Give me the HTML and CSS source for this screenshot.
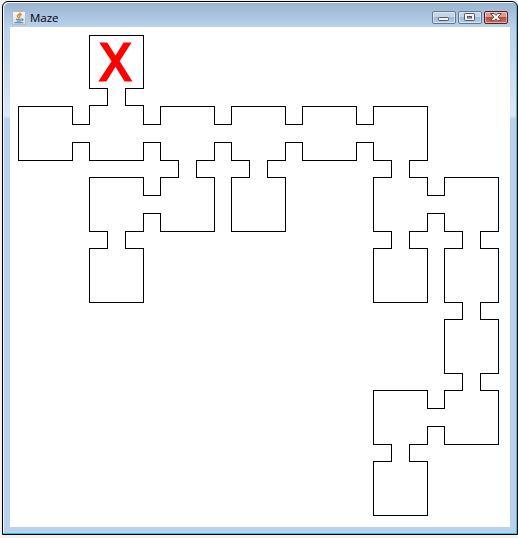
FILE: index.html
```
<!DOCTYPE html>
<html lang="en">
<head>
<meta charset="utf-8">
<title>Maze</title>
<link rel="stylesheet" href="styles.css">
</head>
<body>
<div class="window">
  <header class="titlebar">
    <svg class="app-icon" width="14" height="14" viewBox="0 0 14 14">
      <defs><linearGradient id="ic" x1="0" y1="0" x2="0" y2="1"><stop offset="0" stop-color="#f9f9f9"/><stop offset="1" stop-color="#d6dce3"/></linearGradient></defs>
      <rect x=".5" y=".5" width="13" height="13" fill="url(#ic)" stroke="#b5bbc2"/>
      <path d="M8.3 1.5C8.5 3.5 4.6 3.8 5.4 5.4L6.8 7M9.8 3.4C7.5 4.2 7.2 5.3 8 6.6" fill="none" stroke="#e58425" stroke-width="1.4"/>
      <path d="M4 8.2H9.5M4.7 10H9M9.8 8.2C11.8 7.6 11 9.6 9.5 9.7M2.5 11.7H11.3" fill="none" stroke="#4878a0" stroke-width="1.1"/>
    </svg>
    <h1 class="title">Maze</h1>
    <div class="controls">
      <button class="control" aria-label="Minimize">
        <svg width="22" height="11" viewBox="0 0 22 11"><rect x="5.5" y="5.5" width="10" height="3" rx=".7" fill="#f6f4f1" stroke="#555a6b"/></svg>
      </button>
      <button class="control" aria-label="Maximize">
        <svg width="22" height="11" viewBox="0 0 22 11"><rect x="5.5" y="1.5" width="10" height="7" rx=".7" fill="#f6f4f1" stroke="#555a6b"/><rect x="8.5" y="4.5" width="4" height="1.5" fill="#9fb9d5" stroke="#555a6b"/></svg>
      </button>
      <button class="control close" aria-label="Close">
        <svg width="22" height="11" viewBox="0 0 22 11"><path d="M5.5 1.5H9L10.9 3.4L12.8 1.5H16.3L13 5.1L16.3 8.7H12.8L10.9 6.8L9 8.7H5.5L8.8 5.1Z" fill="#f8f6f6" stroke="#5d4e5d"/></svg>
      </button>
    </div>
  </header>
  <main class="content">
    <svg class="maze" width="500" height="500" viewBox="10 27 500 500">
      <g transform="translate(.5 .5)">
        <path class="wall" d="M89 35H143V88H125V105H143V124H160V106H214V124H231V106H285V124H302V106H356V124H373V106H427V160H409V177H427V195H444V177H498V231H480V248H498V302H480V319H498V373H480V390H498V444H444V426H427V444H409V461H427V515H373V461H391V444H373V390H427V408H444V390H462V373H444V319H462V302H444V248H462V231H444V213H427V231H409V248H427V302H373V248H391V231H373V177H391V160H373V142H356V160H302V142H285V160H267V177H285V231H231V177H249V160H231V142H214V160H196V177H214V231H160V213H143V231H125V248H143V302H89V248H107V231H89V177H143V195H160V177H178V160H160V142H143V160H89V142H72V160H18V106H72V124H89V105H107V88H89Z"/>
      </g>
      <text class="player" transform="translate(115.5 79.7) scale(.92 1)">X</text>
    </svg>
  </main>
</div>
</body>
</html>
```
FILE: styles.css
```
* { box-sizing: border-box; }

body {
  margin: 0;
  width: 518px;
  height: 538px;
  overflow: hidden;
  background: #f2f2f2;
}

.window {
  width: 516px;
  height: 534px;
  margin: 1px 0 0 2px;
  border: 1px solid #000;
  border-radius: 6px 6px 0 0;
  padding: 0 6px 6px 7px;
  display: flex;
  flex-direction: column;
  background: linear-gradient(#99b4d1 0, #b9d1ea 25px, #dce8f6 114px, #b9d1ea 117px);
  box-shadow: inset -1px -1px #2fc3dc, inset 1px 1px #f3f8fc;
}

.titlebar {
  height: 25px;
  flex: none;
  display: flex;
  align-items: flex-start;
  padding: 9px 2px 0;
}

.app-icon { display: block; flex: none; }

.title {
  margin: -1px 0 0 4px;
  font: 400 11.5px/16px "Open Sans", "Noto Sans", sans-serif;
  color: #000;
}

.controls {
  display: flex;
  gap: 2px;
  margin: 0 1px 0 auto;
}

.control {
  width: 24px;
  height: 13px;
  padding: 0;
  border: 1px solid #66788e;
  border-radius: 2px;
  background: linear-gradient(#c3d6e9 0 45%, #9db8d3 46%, #b6d0e8);
  box-shadow: inset 0 0 0 1px #ffffff70;
}

.control svg { display: block; }

.close {
  border-color: #5b1d26;
  background: linear-gradient(#dc9b90 0 45%, #bd4837 46%, #d17258);
}

.content {
  width: 500px;
  height: 500px;
  flex: none;
  background: #fff;
}

.maze { display: block; }

.wall {
  fill: none;
  stroke: #000;
  stroke-width: 1;
  shape-rendering: crispEdges;
}

.player {
  font: 400 51px "Liberation Sans", sans-serif;
  text-anchor: middle;
  fill: #f00;
  stroke: #f00;
  stroke-width: 2.8;
}
```
